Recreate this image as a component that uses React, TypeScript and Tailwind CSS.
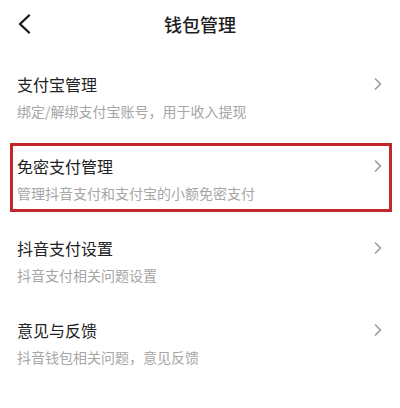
import React from 'react'

const items = [
  { title: '支付宝管理', desc: '绑定/解绑支付宝账号，用于收入提现' },
  { title: '免密支付管理', desc: '管理抖音支付和支付宝的小额免密支付', marked: true },
  { title: '抖音支付设置', desc: '抖音支付相关问题设置' },
  { title: '意见与反馈', desc: '抖音钱包相关问题，意见反馈' },
]

function Chevron() {
  return (
    <svg width="8" height="12" viewBox="0 0 8 12" fill="none" className="shrink-0">
      <path d="M1.5 1 L6.5 6 L1.5 11" stroke="#9a9a9a" strokeWidth="1.6" strokeLinecap="round" strokeLinejoin="round" />
    </svg>
  )
}

export default function App() {
  return (
    <div
      className="w-[400px] h-[408px] bg-white overflow-hidden"
      style={{ fontFamily: '"Noto Sans CJK SC", "Noto Sans", sans-serif' }}
    >
      <div className="relative h-[48px] flex items-center justify-center">
        <svg width="14" height="20" viewBox="0 0 14 20" fill="none" className="absolute left-[17px] top-[14px]">
          <path d="M12 1.5 L3 10 L12 18.5" stroke="#1a1a1a" strokeWidth="2.4" strokeLinecap="round" strokeLinejoin="round" />
        </svg>
        <h1 className="text-[18px] font-medium text-[#1c1c1c] leading-none">钱包管理</h1>
      </div>

      <div className="mt-[9px]">
        {items.map((it) => (
          <div key={it.title} className="relative h-[82px] pl-[17px] pr-[18px] pt-[17px] flex items-start">
            <div className="flex-1">
              <div className="text-[16px] leading-[20px] text-[#222]">{it.title}</div>
              <div className="mt-[7px] text-[14px] leading-[20px] text-[#a6a6a6]">{it.desc}</div>
            </div>
            <div className="pt-[4px]">
              <Chevron />
            </div>
            {it.marked && (
              <div className="absolute left-[10px] right-[8px] top-[4px] h-[69px] border-[3px] border-[#c3262b]" />
            )}
          </div>
        ))}
      </div>
    </div>
  )
}
